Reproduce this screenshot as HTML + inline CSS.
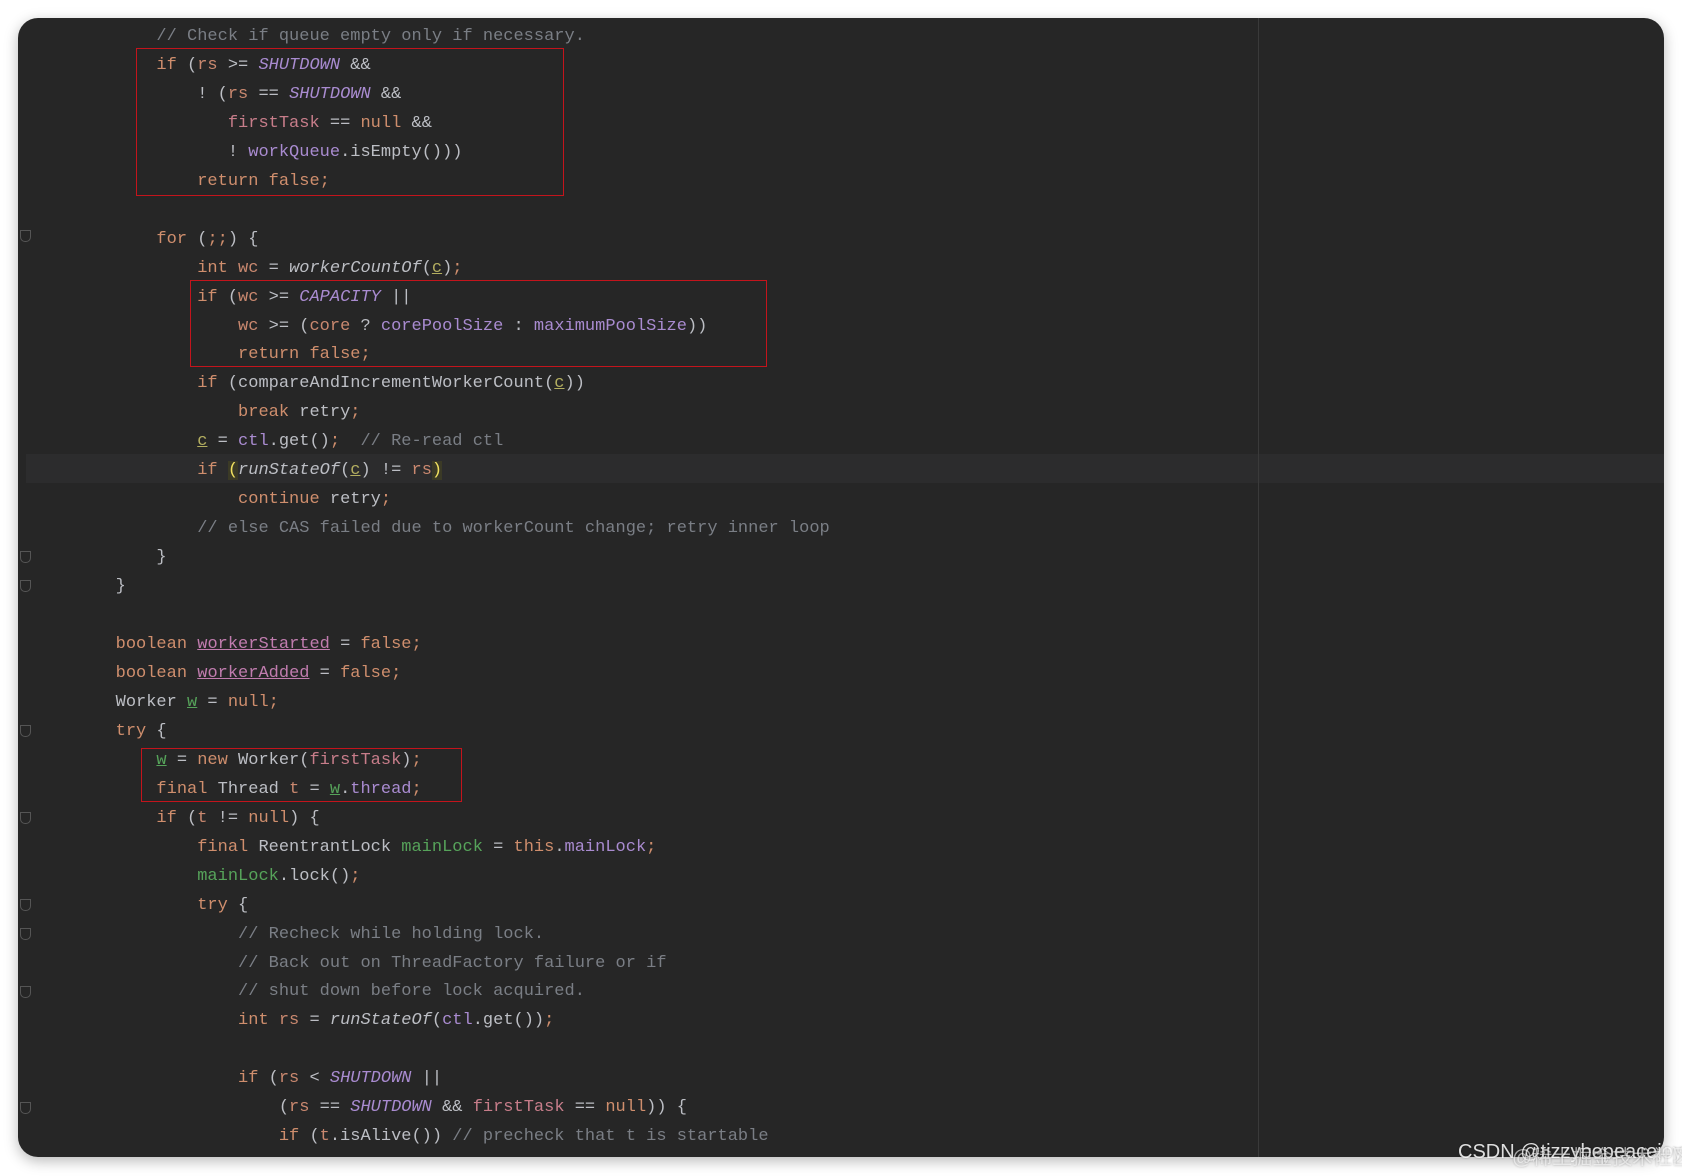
<!DOCTYPE html>
<html><head><meta charset="utf-8"><style>
html,body{margin:0;padding:0;background:#fff;width:1682px;height:1176px;overflow:hidden}
.win{position:absolute;left:18px;top:18px;width:1646px;height:1139px;background:#262626;border-radius:20px;box-shadow:0 4px 14px rgba(0,0,0,.28);overflow:hidden}
.div{position:absolute;left:1240px;top:0;width:1px;height:100%;background:#3a3a3a}
.cur{position:absolute;left:8px;right:0;top:436px;height:29px;background:#2c2c2d}
pre{position:absolute;left:16px;top:5px;margin:0;font-family:"Liberation Mono",monospace;font-size:17px;line-height:28.96px;color:#bcbec4}
.k{color:#cf8e6d}.c{color:#7a7e85}.p{color:#a98bd0}.ci{color:#a98bd0;font-style:italic}.i{font-style:italic}
.l{color:#c9886f}.f{color:#c77d8a}.g{color:#56a35a}.o{color:#b3ae60;text-decoration:underline}.u{text-decoration:underline}
.pu{color:#c07cae;text-decoration:underline}.gu{color:#56a35a;text-decoration:underline}
.bx{position:absolute;border:1.5px solid #c4141c}
.br{background:#3b3a26;color:#f0e060}
.fold{position:absolute;left:2px;width:9px;height:10px;border:1px solid #555;border-radius:0 0 5px 5px}
.wm{position:absolute;left:1458px;top:1141px;font-family:"Liberation Sans","Noto Sans CJK SC",sans-serif;font-size:20px;color:rgba(255,255,255,.85);text-shadow:0 0 2px rgba(0,0,0,.3);white-space:nowrap}
</style></head><body>
<div class="win">
<div class="cur"></div>
<div class="div"></div>
<div class="fold" style="top:212px"></div>
<div class="fold" style="top:533px"></div>
<div class="fold" style="top:562px"></div>
<div class="fold" style="top:707px"></div>
<div class="fold" style="top:794px"></div>
<div class="fold" style="top:881px"></div>
<div class="fold" style="top:910px"></div>
<div class="fold" style="top:968px"></div>
<div class="fold" style="top:1084px"></div>
<pre>            <span class="c">// Check if queue empty only if necessary.</span>
            <span class="k">if</span> (<span class="l">rs</span> &gt;= <span class="ci">SHUTDOWN</span> &amp;&amp;
                ! (<span class="l">rs</span> == <span class="ci">SHUTDOWN</span> &amp;&amp;
                   <span class="f">firstTask</span> == <span class="k">null</span> &amp;&amp;
                   ! <span class="p">workQueue</span>.isEmpty()))
                <span class="k">return false;</span>

            <span class="k">for</span> (<span class="k">;;</span>) {
                <span class="k">int</span> <span class="l">wc</span> = <span class="i">workerCountOf</span>(<span class="o">c</span>)<span class="k">;</span>
                <span class="k">if</span> (<span class="l">wc</span> &gt;= <span class="ci">CAPACITY</span> ||
                    <span class="l">wc</span> &gt;= (<span class="l">core</span> ? <span class="p">corePoolSize</span> : <span class="p">maximumPoolSize</span>))
                    <span class="k">return false;</span>
                <span class="k">if</span> (compareAndIncrementWorkerCount(<span class="o">c</span>))
                    <span class="k">break</span> retry<span class="k">;</span>
                <span class="o">c</span> = <span class="p">ctl</span>.get()<span class="k">;</span>  <span class="c">// Re-read ctl</span>
                <span class="k">if</span> <span class="br">(</span><span class="i">runStateOf</span>(<span class="o">c</span>) != <span class="l">rs</span><span class="br">)</span>
                    <span class="k">continue</span> retry<span class="k">;</span>
                <span class="c">// else CAS failed due to workerCount change; retry inner loop</span>
            }
        }

        <span class="k">boolean</span> <span class="pu">workerStarted</span> = <span class="k">false;</span>
        <span class="k">boolean</span> <span class="pu">workerAdded</span> = <span class="k">false;</span>
        Worker <span class="gu">w</span> = <span class="k">null;</span>
        <span class="k">try</span> {
            <span class="gu">w</span> = <span class="k">new</span> Worker(<span class="f">firstTask</span>)<span class="k">;</span>
            <span class="k">final</span> Thread <span class="l">t</span> = <span class="gu">w</span>.<span class="p">thread</span><span class="k">;</span>
            <span class="k">if</span> (<span class="l">t</span> != <span class="k">null</span>) {
                <span class="k">final</span> ReentrantLock <span class="g">mainLock</span> = <span class="k">this</span>.<span class="p">mainLock</span><span class="k">;</span>
                <span class="g">mainLock</span>.lock()<span class="k">;</span>
                <span class="k">try</span> {
                    <span class="c">// Recheck while holding lock.</span>
                    <span class="c">// Back out on ThreadFactory failure or if</span>
                    <span class="c">// shut down before lock acquired.</span>
                    <span class="k">int</span> <span class="l">rs</span> = <span class="i">runStateOf</span>(<span class="p">ctl</span>.get())<span class="k">;</span>

                    <span class="k">if</span> (<span class="l">rs</span> &lt; <span class="ci">SHUTDOWN</span> ||
                        (<span class="l">rs</span> == <span class="ci">SHUTDOWN</span> &amp;&amp; <span class="f">firstTask</span> == <span class="k">null</span>)) {
                        <span class="k">if</span> (<span class="l">t</span>.isAlive()) <span class="c">// precheck that t is startable</span>
</pre>
<div class="bx" style="left:118px;top:30px;width:426px;height:146px"></div>
<div class="bx" style="left:172px;top:262px;width:575px;height:85px"></div>
<div class="bx" style="left:123px;top:730px;width:319px;height:52px"></div>
</div>
<div class="wm">CSDN @tizzybepeacejoy</div>
<div class="wm" style="left:1512px;color:rgba(255,255,255,.6)">@稀土掘金技术社区</div>
</body></html>
